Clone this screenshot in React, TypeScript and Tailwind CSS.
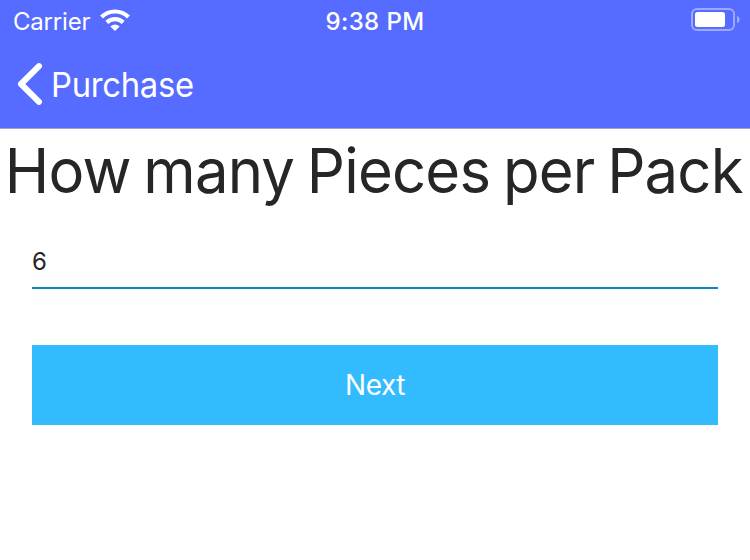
export default function App() {
  return (
    <div className="flex h-[560px] w-[750px] flex-col overflow-hidden bg-white font-['Inter',sans-serif] text-[#262626]">
      <header className="flex h-[129px] shrink-0 flex-col border-b border-[#a3a5b8] bg-[#566bff] text-white">
        <div className="grid h-10 grid-cols-3 items-center pl-[13px] pr-[11px]">
          <div className="flex items-center gap-2.5">
            <span className="pt-0.5 text-[24px] leading-10 tracking-[-0.2px]">Carrier</span>
            <svg className="-mt-[3px]" width="30" height="22" viewBox="0 0 30 22" fill="none" stroke="white" strokeWidth="4.2">
              <path d="M15 22 L19.7 17.4 Q15 13.6 10.3 17.4 Z" fill="white" stroke="none" />
              <path d="M6.8 13.4 A12 12 0 0 1 23.2 13.4" />
              <path d="M1.5 8 A19.3 19.3 0 0 1 28.5 8" />
            </svg>
          </div>
          <span className="-ml-[2px] pt-0.5 text-center text-[24px] font-medium leading-10 tracking-[0.4px]">9:38 PM</span>
          <svg className="-mr-px -mt-[2px] justify-self-end" width="52" height="24" viewBox="0 0 52 24">
            <rect x="4" y="1" width="42" height="21" rx="5" fill="none" stroke="white" strokeOpacity=".42" strokeWidth="2" />
            <rect x="7" y="4" width="30" height="15" rx="2.5" fill="white" />
            <path d="M49.5 8 Q53 11.5 49.5 15 Z" fill="white" stroke="white" strokeWidth="0.5" opacity=".5" />
          </svg>
        </div>
        <div className="flex h-[88px] items-center pl-[17px]">
          <svg width="26" height="42" viewBox="0 0 26 42" fill="none" stroke="white" strokeWidth="6" strokeLinecap="round" strokeLinejoin="round">
            <path d="M22 3.2L4 21L22 38.8" />
          </svg>
          <span className="ml-2 origin-left scale-x-[0.965] text-[34px] tracking-[-0.3px]">Purchase</span>
        </div>
      </header>
      <h1 className="h-[87px] origin-left scale-x-[0.965] whitespace-nowrap pl-[5px] text-[62px] leading-[83px] tracking-[-0.85px] [word-spacing:-3.4px]">How many Pieces per Pack</h1>
      <main className="flex flex-col px-8">
        <div className="mt-5 h-[53px] border-b-2 border-[#0b88c4] text-[24px] leading-[52px]">6</div>
        <button className="mt-14 h-20 bg-[#33bbff] text-[28px] tracking-[-0.5px] text-white">Next</button>
      </main>
    </div>
  );
}
